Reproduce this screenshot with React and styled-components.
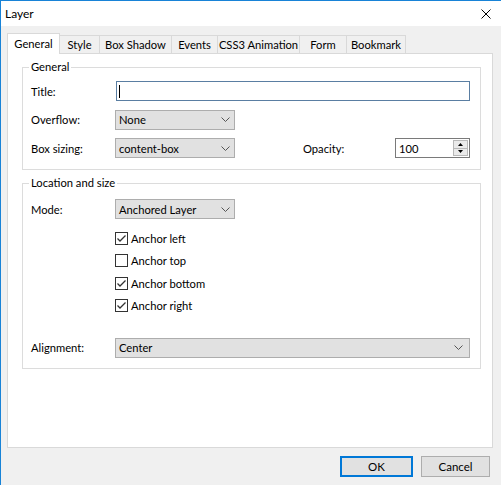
import React from "react";
import styled, { createGlobalStyle } from "styled-components";

const GlobalStyle = createGlobalStyle`
  html, body { margin: 0; padding: 0; background: #f0f0f0; }
  body {
    font-family: Lato, "Noto Sans", "Liberation Sans", sans-serif;
    font-size: 11.2px;
    color: #000;
  }
  * { box-sizing: border-box; }
`;

const Window = styled.div`
  width: 501px;
  height: 485px;
  display: flex;
  flex-direction: column;
  border-top: 1px solid #1883d7;
  border-left: 1px solid #1883d7;
  background: #f0f0f0;
  overflow: hidden;
`;

const TitleBar = styled.div`
  height: 25px;
  flex: none;
  background: #fff;
  display: flex;
  align-items: center;
  justify-content: space-between;
  padding: 0 10px 0 4px;
  font-size: 12px;
`;

const Body = styled.div`
  flex: 1;
  display: flex;
  flex-direction: column;
  padding: 7px 8px 0 6px;
`;

const TabStrip = styled.div`
  display: flex;
  align-items: flex-end;
  height: 20px;
  position: relative;
  z-index: 1;
`;

const Tab = styled.div`
  width: ${(p) => p.$w}px;
  height: ${(p) => (p.$active ? 21 : 18)}px;
  margin-bottom: ${(p) => (p.$active ? -1 : 0)}px;
  background: ${(p) => (p.$active ? "#fff" : "#f0f0f0")};
  border: 1px solid #d9d9d9;
  border-bottom: none;
  display: flex;
  align-items: center;
  justify-content: center;
  padding-bottom: ${(p) => (p.$active ? 2 : 0)}px;
  white-space: nowrap;
  &:not(:first-child) {
    margin-left: -1px;
  }
`;

const Panel = styled.div`
  height: 395px;
  flex: none;
  background: #fff;
  border: 1px solid #d9d9d9;
  display: flex;
  flex-direction: column;
  padding: 0 11px 0 14px;
`;

const Group = styled.fieldset`
  margin: 5px 0 0;
  padding: ${(p) => p.$pad};
  border: 1px solid #dcdcdc;
  min-width: 0;
  display: flex;
  flex-direction: column;
`;

const Legend = styled.legend`
  line-height: 16px;
  padding: 0 2px;
  margin-left: -2px;
`;

const Rows = styled.div`
  display: flex;
  flex-direction: column;
  gap: 8.5px;
`;

const Row = styled.div`
  display: flex;
  align-items: center;
  height: 20px;
  margin-top: ${(p) => p.$mt || 0}px;
`;

const Label = styled.span`
  width: 84px;
  flex: none;
`;

const TextBox = styled.div`
  flex: 1;
  height: 20px;
  margin-left: 1px;
  border: 1px solid #5a7ea2;
  background: #fff;
  display: flex;
  align-items: center;
  padding-left: 2px;
`;

const Caret = styled.span`
  width: 1px;
  height: 13px;
  background: #000;
`;

const SelectBox = styled.div`
  width: ${(p) => (p.$w ? `${p.$w}px` : "auto")};
  flex: ${(p) => (p.$w ? "none" : "1")};
  height: 20px;
  border: 1px solid #adadad;
  background: #e1e1e1;
  display: flex;
  align-items: center;
  justify-content: space-between;
  padding: 0 ${(p) => p.$pr || 4}px 0 3px;
`;

const OpacityLabel = styled.span`
  margin-left: auto;
  width: 92px;
`;

const Spin = styled.div`
  width: 75px;
  height: 20px;
  border: 1px solid #7a7a7a;
  background: #fff;
  display: flex;
  align-items: stretch;
`;

const SpinValue = styled.span`
  flex: 1;
  display: flex;
  align-items: center;
  padding-left: 3px;
`;

const SpinButtons = styled.div`
  width: 16px;
  display: flex;
  flex-direction: column;
  padding: 1px 1px 1px 0;
`;

const SpinButton = styled.div`
  flex: 1;
  border: 1px solid #b8b8b8;
  background: #eaeaea;
  display: flex;
  align-items: center;
  justify-content: center;
  &:last-child {
    border-top: none;
  }
`;

const CheckList = styled.div`
  display: flex;
  flex-direction: column;
  gap: 9.33px;
  padding-left: 84px;
  margin-top: 13px;
`;

const CheckRow = styled.div`
  display: flex;
  align-items: center;
  gap: 3px;
  height: 13px;
  line-height: 13px;
`;

const Box = styled.span`
  width: 13px;
  height: 13px;
  flex: none;
  border: 1px solid #333;
  background: #fff;
  display: inline-flex;
  align-items: center;
  justify-content: center;
`;

const ButtonRow = styled.div`
  display: flex;
  justify-content: flex-end;
  gap: 8px;
  margin-top: 8px;
  padding-right: 3px;
`;

const Button = styled.button`
  width: ${(p) => p.$w}px;
  height: 21px;
  padding: 0;
  font: inherit;
  font-size: 11.5px;
  color: #000;
  background: #e1e1e1;
  border: ${(p) => (p.$primary ? "2px solid #0078d7" : "1px solid #adadad")};
`;

const Chevron = () => (
  <svg width="9" height="5" viewBox="0 0 9 5">
    <path d="M0.5 0.5 L4.5 4.5 L8.5 0.5" fill="none" stroke="#555" strokeWidth="1" />
  </svg>
);

const CloseIcon = () => (
  <svg width="10" height="10" viewBox="0 0 10 10">
    <path d="M0.5 0.5 L9.5 9.5 M9.5 0.5 L0.5 9.5" stroke="#000" strokeWidth="1" />
  </svg>
);

const Check = () => (
  <svg width="11" height="11" viewBox="0 0 11 11">
    <path d="M1.5 5.5 L4 8 L9.5 2.5" fill="none" stroke="#333" strokeWidth="1.3" />
  </svg>
);

const Select = ({ value, w, pr }) => (
  <SelectBox $w={w} $pr={pr}>
    <span>{value}</span>
    <Chevron />
  </SelectBox>
);

const CheckItem = ({ checked, children }) => (
  <CheckRow>
    <Box>{checked && <Check />}</Box>
    <span>{children}</span>
  </CheckRow>
);

const tabs = [
  ["General", 53],
  ["Style", 41],
  ["Box Shadow", 73],
  ["Events", 47],
  ["CSS3 Animation", 83],
  ["Form", 48],
  ["Bookmark", 60],
];

export default function App() {
  return (
    <>
      <GlobalStyle />
      <Window>
        <TitleBar>
          <span>Layer</span>
          <CloseIcon />
        </TitleBar>
        <Body>
          <TabStrip>
            {tabs.map(([name, w], i) => (
              <Tab key={name} $w={w} $active={i === 0}>
                {name}
              </Tab>
            ))}
          </TabStrip>
          <Panel>
            <Group $pad="6px 10px 11px 8px">
              <Legend>General</Legend>
              <Rows>
                <Row>
                  <Label>Title:</Label>
                  <TextBox>
                    <Caret />
                  </TextBox>
                </Row>
                <Row>
                  <Label>Overflow:</Label>
                  <Select value="None" w={120} />
                </Row>
                <Row>
                  <Label>Box sizing:</Label>
                  <Select value="content-box" w={120} />
                  <OpacityLabel>Opacity:</OpacityLabel>
                  <Spin>
                    <SpinValue>100</SpinValue>
                    <SpinButtons>
                      <SpinButton>
                        <svg width="5" height="3" viewBox="0 0 5 3">
                          <path d="M2.5 0 L5 3 L0 3 Z" fill="#000" />
                        </svg>
                      </SpinButton>
                      <SpinButton>
                        <svg width="5" height="3" viewBox="0 0 5 3">
                          <path d="M0 0 L5 0 L2.5 3 Z" fill="#000" />
                        </svg>
                      </SpinButton>
                    </SpinButtons>
                  </Spin>
                </Row>
              </Rows>
            </Group>
            <Group $pad="8px 10px 10px 8px">
              <Legend>Location and size</Legend>
              <Row>
                <Label>Mode:</Label>
                <Select value="Anchored Layer" w={120} />
              </Row>
              <CheckList>
                <CheckItem checked>Anchor left</CheckItem>
                <CheckItem>Anchor top</CheckItem>
                <CheckItem checked>Anchor bottom</CheckItem>
                <CheckItem checked>Anchor right</CheckItem>
              </CheckList>
              <Row $mt={26}>
                <Label>Alignment:</Label>
                <Select value="Center" pr={6} />
              </Row>
            </Group>
          </Panel>
          <ButtonRow>
            <Button $w={73} $primary>
              OK
            </Button>
            <Button $w={69}>Cancel</Button>
          </ButtonRow>
        </Body>
      </Window>
    </>
  );
}
